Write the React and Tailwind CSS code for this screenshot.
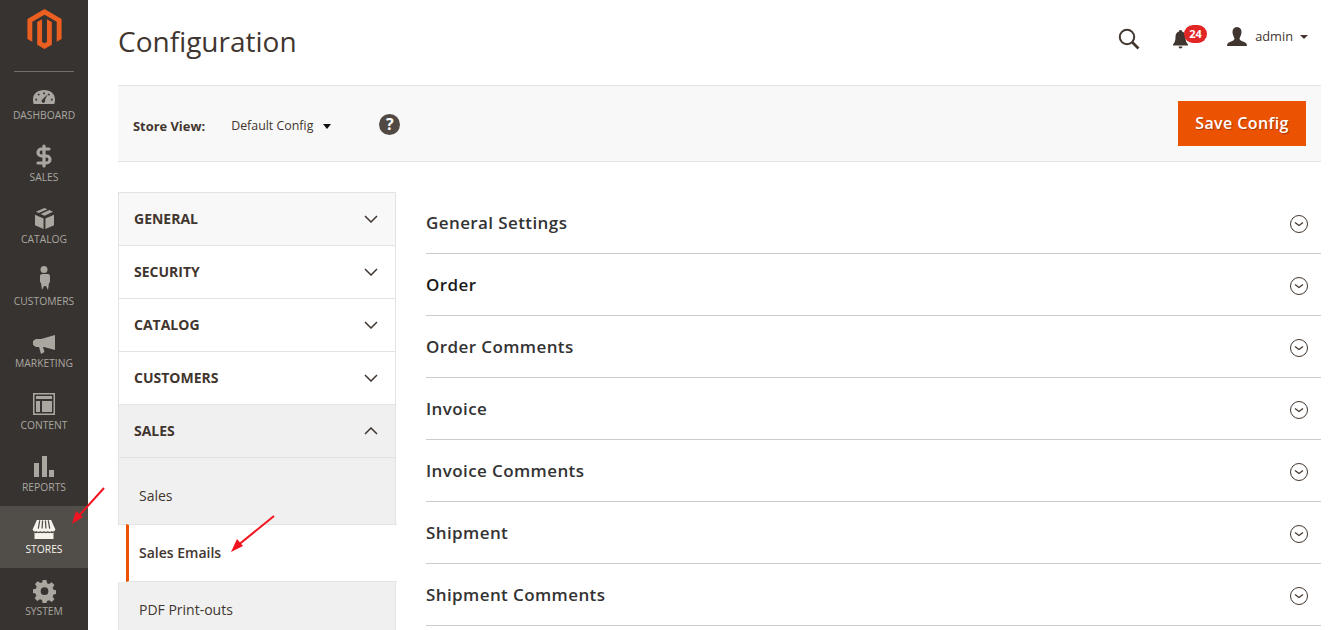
import React from "react";
import { DollarSign } from "lucide-react";

const menu = [
  { label: "DASHBOARD", icon: "dashboard" },
  { label: "SALES", icon: "sales" },
  { label: "CATALOG", icon: "catalog" },
  { label: "CUSTOMERS", icon: "customers" },
  { label: "MARKETING", icon: "marketing" },
  { label: "CONTENT", icon: "content" },
  { label: "REPORTS", icon: "reports" },
  { label: "STORES", icon: "stores", active: true },
  { label: "SYSTEM", icon: "system" },
];

const sections = [
  "General Settings",
  "Order",
  "Order Comments",
  "Invoice",
  "Invoice Comments",
  "Shipment",
  "Shipment Comments",
];

const navGroups = [
  { label: "GENERAL", bg: "bg-[#f8f8f8]" },
  { label: "SECURITY", bg: "bg-white" },
  { label: "CATALOG", bg: "bg-white" },
  { label: "CUSTOMERS", bg: "bg-white" },
];

const MenuIcon = ({ name }) => {
  const fill = "currentColor";
  switch (name) {
    case "dashboard":
      return (
        <svg width="22" height="16" viewBox="0 0 24 18" preserveAspectRatio="none">
          <path fill={fill} fillRule="evenodd" d="M1 17C0 15 0 13 0 12 0 5 5 1 12 1s12 4 12 11c0 1 0 3-1 5zM11 4h2v2h-2zM5 6l1.500-1 1 1.500-1.500 1zM17 5l1.500 1-1 1.500L16 6.500zM2.500 11h2v2h-2zM19.500 11h2v2h-2zM16 6l-3 6.500a2 2 0 1 1-3-.5z" />
        </svg>
      );
    case "sales":
      return <DollarSign className="mb-[-1px]" size={24} strokeWidth={3.2} />;
    case "catalog":
      return (
        <svg width="19" height="21" viewBox="0 0 20 22">
          <path fill={fill} d="M0 7l9 4v11l-9-4zM20 7v11l-9 4V11zM10 0l3 1.200-9 4L1 4zM15 2l4 2-9 4-4-1.800z" />
        </svg>
      );
    case "customers":
      return (
        <svg className="mb-[1px]" width="12" height="24" viewBox="0 0 12 24">
          <circle cx="6" cy="3.500" r="3.500" fill={fill} />
          <path fill={fill} d="M2 8h8c1 0 2 1 2 2v6l-1 1-1 7-2-4-2 0-2 4-1-7-1-1v-6c0-1 1-2 2-2z" />
        </svg>
      );
    case "marketing":
      return (
        <svg className="mb-[-1px]" width="22" height="19" viewBox="0 0 22 19">
          <path fill={fill} d="M22 0v15L11 12l-1 0 1.500 5-3.500 2-2-7-3 0-3-2V6l3-2h5z" />
        </svg>
      );
    case "content":
      return (
        <svg width="22" height="22" viewBox="0 0 22 22">
          <path fill={fill} fillRule="evenodd" d="M0 0h22v22H0zM1.500 1.500v19h19v-19zM3 3h16v3H3zM3 8h4v11H3zM9 8h10v11H9z" />
        </svg>
      );
    case "reports":
      return (
        <svg width="20" height="21" viewBox="0 0 20 21">
          <path fill={fill} d="M0 7h5v14H0zM8 0h5v21H8zM15 14h5v7h-5z" />
        </svg>
      );
    case "stores":
      return (
        <svg width="24" height="19" viewBox="0 0 24 20">
          <path fill={fill} d="M4.500 0h15L24 10a2.500 2.500 0 0 1-4 1.500 3 3 0 0 1-4 0 3 3 0 0 1-4 0 3 3 0 0 1-4 0 3 3 0 0 1-4 0A2.500 2.500 0 0 1 0 10z" />
          <path stroke="#514e4a" strokeWidth="1.300" d="M7.500 0.500L6 9M10.500 0.500L10 9M13.500 0.500L14 9M16.500 0.500L18 9" />
          <path fill={fill} d="M2 13.500c1 .5 2 .5 3 0 1 .5 2 .5 3 0 1.300.5 2.700.5 4 0 1.300.5 2.700.5 4 0 1 .5 2 .5 3 0 1 .5 2 .5 3 0V20H2z" />
        </svg>
      );
    default:
      return (
        <svg className="mb-[-2px]" width="23" height="23" viewBox="0 0 22 22">
          <path fill={fill} fillRule="evenodd" d="M9 0h4l.6 3.200 2.200.9L18.500 2.300l2.800 2.800-1.800 2.700.9 2.200 3 .6v3.800l-3 .6-.9 2.200 1.800 2.700-2.800 2.800-2.700-1.800-2.200.9L13 24H9l-.6-3.200-2.200-.9-2.700 1.800-2.800-2.800 1.800-2.700-.9-2.200L-1 13.400V9.600l3-.6.900-2.200L1.100 4.100l2.800-2.800 2.700 1.800 2.200-.9zM11 7.500a4 4 0 1 0 0 8 4 4 0 0 0 0-8z" transform="translate(.9 .1) scale(.92)" />
        </svg>
      );
  }
};

const Chevron = ({ up }) => (
  <svg className="mt-[2px]" width="14" height="8" viewBox="0 0 14 8" fill="none" stroke="#41362f" strokeWidth="1.500">
    <path d={up ? "M1 7l6-6 6 6" : "M1 1l6 6 6-6"} />
  </svg>
);

export default function App() {
  return (
    <div className="relative flex w-[1336px] h-[630px] overflow-hidden bg-white text-[#41362f] font-['Open_Sans',sans-serif]">
      {/* SIDEBAR */}
      <aside className="w-[88px] h-[630px] shrink-0 bg-[#373330]">
        <div className="flex flex-col items-center h-[72px]">
          <svg className="mt-[9px]" width="35" height="41" viewBox="0 0 35 41">
            <path fill="#eb5f21" d="M17.500 0L35 10.200v20.400l-5 3V13.100L17.500 6 5 13.100v20.500l-5-3V10.200z" />
            <path fill="#eb5f21" d="M10 13.200l5 -2.800v23.400l2.500 1.400 2.500-1.400V10.400l5 2.800v23.500L17.500 41 10 36.700z" />
          </svg>
          <div className="mt-[22px] w-[60px] h-px bg-[#736e66]" />
        </div>
        {menu.map((item) => (
          <div
            key={item.label}
            className={`flex flex-col items-center h-[62px] ${item.active ? "bg-[#514e4a] text-[#f7f3eb]" : "text-[#aaa6a0]"}`}
          >
            <div className="h-[35px] w-full flex items-end justify-center pb-[2px]">
              <MenuIcon name={item.icon} />
            </div>
            <span className="mt-[1px] text-[10.300px] leading-[14px]">{item.label}</span>
          </div>
        ))}
      </aside>

      {/* MAIN */}
      <main className="w-[1203px] ml-[30px] shrink-0">
        <header className="flex items-center justify-between h-[85px] pb-[4px]">
          <h1 className="text-[28px] leading-[38px] font-normal text-[#41362f]">Configuration</h1>
          <div className="flex items-center pr-[13px] pb-[8px]">
            <svg className="mt-[5px]" width="22" height="22" viewBox="0 0 22 22" fill="none" stroke="#41362f">
              <circle cx="9" cy="9" r="7.200" strokeWidth="2" />
              <path d="M14 14l6.500 6.500" strokeWidth="2.600" />
            </svg>
            <div className="relative ml-[33px] mt-[4px] w-[34px] h-[20px]">
              <svg className="absolute left-0 top-[1px]" width="15" height="19" viewBox="0 0 15 19">
                <path fill="#41362f" d="M7.500 0a1.500 1.500 0 0 1 1.500 1.600C11.500 2.300 12.500 4.500 12.500 7c0 4 .8 5.500 2.500 7.500v1H0v-1C1.700 12.500 2.500 11 2.500 7c0-2.500 1-4.700 3.500-5.400A1.500 1.500 0 0 1 7.500 0zM5.500 16.500h4a2 2 0 0 1-4 0z" />
              </svg>
              <span className="absolute left-[11px] top-[-4px] w-[23px] h-[18px] rounded-full bg-[#e22626] text-white text-[11px] leading-[18px] font-bold text-center">24</span>
            </div>
            <svg className="ml-[20px]" width="20" height="19" viewBox="0 0 20 19">
              <path fill="#41362f" d="M10 0c3 0 4.500 2.200 4.500 5S13 10 12.500 11.500c0 1.500 1.500 2.200 3.500 3 2.500 1 4 1.800 4 4.500H0c0-2.700 1.500-3.500 4-4.500 2-.8 3.500-1.500 3.500-3C7 10 5.500 7.800 5.500 5S7 0 10 0z" />
            </svg>
            <span className="ml-[8px] mb-[2px] text-[12.800px] leading-[18px] text-[#41362f]">admin</span>
            <span className="ml-[7px] mt-[1px] w-0 h-0 border-x-[4px] border-x-transparent border-t-[4.500px] border-t-[#41362f]" />
          </div>
        </header>

        {/* TOOLBAR */}
        <div className="flex items-center justify-between h-[77px] px-[15px] bg-[#f8f8f8] border-y border-[#e3e3e3]">
          <div className="flex items-center">
            <span className="pt-[4px] text-[12.900px] leading-[18px] font-bold text-[#41362f]">Store View:</span>
            <span className="ml-[26px] pt-[4px] text-[12.400px] leading-[18px] text-[#41362f]">Default Config</span>
            <span className="ml-[10px] mt-[6px] w-0 h-0 border-x-[4px] border-x-transparent border-t-[5px] border-t-[#111111]" />
            <span className="ml-[48px] mt-[2px] w-[21px] h-[21px] rounded-full bg-[#514943] text-white text-[16px] leading-[21px] font-bold text-center">?</span>
          </div>
          <button className="w-[128px] h-[45px] pb-[2px] bg-[#eb5202] text-white text-[16px] font-semibold tracking-[0.4px] [text-shadow:1px_1px_1px_rgba(0,0,0,0.3)]">
            Save Config
          </button>
        </div>

        {/* BODY */}
        <div className="flex mt-[30px]">
          <nav className="w-[278px] shrink-0">
            <div className="border border-[#e3e3e3]">
              {navGroups.map((group) => (
                <div
                  key={group.label}
                  className={`flex items-center justify-between h-[53px] pl-[15px] pr-[17px] pb-[2px] ${group.bg} border-b border-[#e3e3e3]`}
                >
                  <span className="text-[14px] font-bold text-[#41362f]">{group.label}</span>
                  <Chevron />
                </div>
              ))}
              <div className="flex items-center justify-between h-[53px] pl-[15px] pr-[17px] pb-[2px] bg-[#f0f0f0] border-b border-[#e3e3e3]">
                <span className="text-[14px] font-bold text-[#41362f]">SALES</span>
                <Chevron up />
              </div>
              <div className="flex items-end h-[66px] pl-[20px] pb-[19px] bg-[#f0f0f0] text-[14px] leading-[19px] text-[#41362f]">Sales</div>
            </div>
            <div className="flex items-center h-[58px] -mt-px ml-[8px] -mr-px pl-[9px] pb-[2px] bg-white border-l-[3px] border-l-[#eb5202] border-t border-t-[#e3e3e3] border-b border-b-[#e3e3e3] text-[14px] font-semibold text-[#41362f]">
              <span className="pl-[1px]">Sales Emails</span>
            </div>
            <div className="flex items-center h-[56px] pl-[20px] pb-[2px] bg-[#f0f0f0] border-x border-[#e3e3e3] text-[14px] text-[#41362f]">PDF Print-outs</div>
          </nav>

          <section className="flex-1 ml-[30px]">
            {sections.map((title) => (
              <div key={title} className="flex items-center justify-between h-[62px] pr-[13px] pt-px border-b border-[#cccccc]">
                <span className={`text-[17px] font-semibold tracking-[0.4px] ${title === "Order" ? "text-[#1a1a1a]" : "text-[#333333]"}`}>{title}</span>
                <svg className="mt-[2px]" width="18" height="18" viewBox="0 0 18 18" fill="none" stroke="#41362f">
                  <circle cx="9" cy="9" r="8.500" strokeWidth="1" />
                  <path d="M5 7.500l4 3 4-3" strokeWidth="1.200" />
                </svg>
              </div>
            ))}
          </section>
        </div>
      </main>

      {/* ARROWS */}
      <svg className="absolute left-[70px] top-[486px]" width="36" height="40" viewBox="0 0 36 40">
        <path d="M34 2L6 33" stroke="#f01420" strokeWidth="2" fill="none" />
        <path d="M2 38l4-13 7 6z" fill="#f01420" />
      </svg>
      <svg className="absolute left-[230px] top-[514px]" width="46" height="40" viewBox="0 0 46 40">
        <path d="M44 2L7 32" stroke="#f01420" strokeWidth="2" fill="none" />
        <path d="M1 38l6-13 6 7z" fill="#f01420" />
      </svg>
    </div>
  );
}
